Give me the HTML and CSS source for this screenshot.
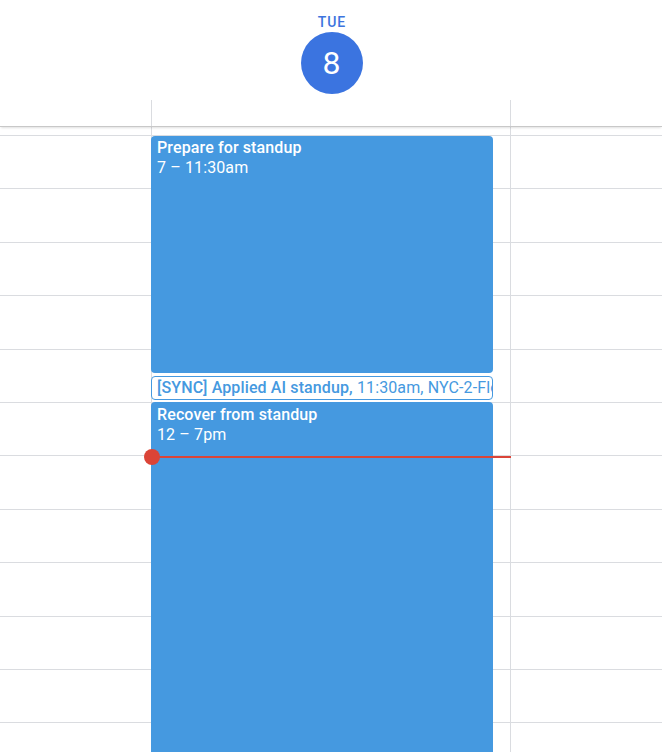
FILE: index.html
```html
<!DOCTYPE html>
<html lang="en">
<head>
<meta charset="utf-8">
<title>Calendar - Tue 8</title>
<link rel="stylesheet" href="styles.css">
</head>
<body>
<div class="cal">
  <header class="head">
    <div class="head-top">
      <div class="gutter"></div>
      <div class="day-label">
        <span class="dow">TUE</span>
        <span class="date">8</span>
      </div>
      <div></div>
    </div>
    <div class="head-allday">
      <div class="gutter"></div>
      <div class="allday-cell"></div>
      <div></div>
    </div>
  </header>
  <main class="body">
    <div class="lines">
      <div class="hour"></div><div class="hour"></div><div class="hour"></div>
      <div class="hour"></div><div class="hour"></div><div class="hour"></div>
      <div class="hour"></div><div class="hour"></div><div class="hour"></div>
      <div class="hour"></div><div class="hour"></div><div class="hour"></div>
    </div>
    <div class="day-col">
      <div class="event" style="top:9px;height:237px">
        <div class="ev-title">Prepare for standup</div>
        <div class="ev-time">7 – 11:30am</div>
      </div>
      <div class="event-outline" style="top:249px;height:24px">
        <span class="ev-title">[SYNC] Applied AI standup,</span> 11:30am, NYC-2-Floor-3
      </div>
      <div class="event event-tall" style="top:275px;height:400px">
        <div class="ev-title">Recover from standup</div>
        <div class="ev-time">12 – 7pm</div>
      </div>
      <div class="now" style="top:329px">
        <span class="now-dot"></span>
      </div>
    </div>
  </main>
</div>
</body>
</html>
```
FILE: styles.css
```css
html, body {
  margin: 0;
  padding: 0;
  background: #fff;
}
body {
  font-family: Roboto, "Liberation Sans", Arial, sans-serif;
  overflow: hidden;
  height: 752px;
}
.cal {
  display: flex;
  flex-direction: column;
  height: 752px;
}
.head {
  position: relative;
  z-index: 3;
  background: #fff;
  border-bottom: 1px solid #c8c8c8;
  box-shadow: 0 2px 2px -1px rgba(0, 0, 0, 0.12);
}
.head-top,
.head-allday,
.body {
  display: grid;
  grid-template-columns: 151px 360px 1fr;
}
.head-top {
  height: 100px;
}
.day-label {
  display: flex;
  flex-direction: column;
  align-items: center;
  padding-top: 14px;
  padding-left: 1px;
  box-sizing: border-box;
}
.dow {
  font-size: 14px;
  line-height: 16px;
  font-weight: 500;
  letter-spacing: 0.9px;
  color: #3d74de;
  padding-left: 1px;
}
.date {
  margin-top: 2px;
  width: 62px;
  height: 62px;
  border-radius: 50%;
  background: #3b74e0;
  color: #fff;
  font-size: 32px;
  font-weight: 400;
  display: flex;
  align-items: center;
  justify-content: center;
}
.head-allday {
  height: 26px;
}
.allday-cell {
  border-left: 1px solid #dadce0;
  border-right: 1px solid #dadce0;
}
.body {
  flex: 1;
  grid-template-rows: 1fr;
  min-height: 0;
  overflow: hidden;
}
.lines {
  grid-area: 1 / 1 / -1 / -1;
  display: flex;
  flex-direction: column;
  padding-top: 8px;
}
.hour {
  flex: 0 0 53.4px;
  box-sizing: border-box;
  border-top: 1px solid #dadce0;
}
.day-col {
  grid-area: 1 / 2 / -1 / 3;
  position: relative;
  z-index: 1;
  border-left: 1px solid #dadce0;
  border-right: 1px solid #dadce0;
}
.event {
  position: absolute;
  left: -1px;
  width: 342px;
  box-sizing: border-box;
  background: #4599e0;
  border-radius: 4px;
  color: #fff;
  font-size: 16px;
  line-height: 20px;
  letter-spacing: 0.12px;
  padding: 2px 6px;
}
.event-tall {
  padding-top: 3px;
}
.ev-title {
  font-weight: 500;
}
.event-outline {
  position: absolute;
  left: -1px;
  width: 342px;
  box-sizing: border-box;
  background: #fff;
  border: 1px solid #4599e0;
  border-radius: 4px;
  color: #4599e0;
  font-size: 16px;
  line-height: 20px;
  letter-spacing: 0.12px;
  padding: 1px 5px;
  white-space: nowrap;
  overflow: hidden;
}
.now {
  position: absolute;
  left: 0;
  right: -1px;
  height: 2px;
  background: #db4437;
  z-index: 2;
}
.now-dot {
  position: absolute;
  left: -8px;
  top: -7px;
  width: 16px;
  height: 16px;
  border-radius: 50%;
  background: #db4437;
}
```
